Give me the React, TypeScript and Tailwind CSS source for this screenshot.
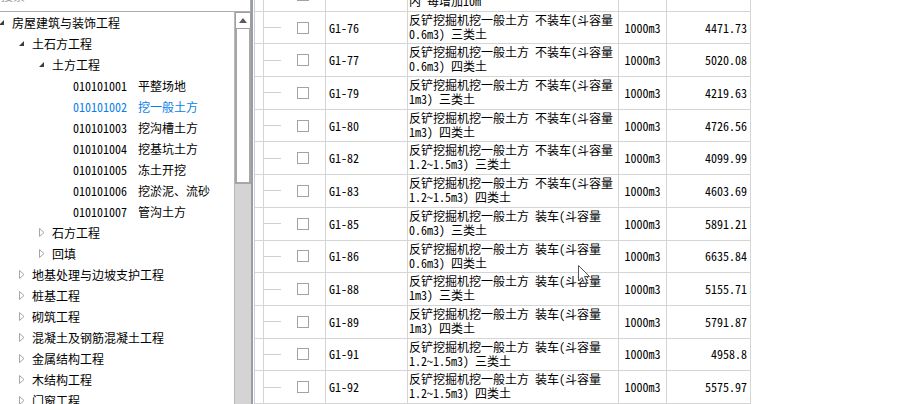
import React from "react";

const font = "font-['Noto_Sans_Mono_CJK_SC','Noto_Sans_CJK_SC','Liberation_Mono',monospace]";

type Node = { lvl: number; text: string; code?: string; open?: boolean; leaf?: boolean; sel?: boolean };

const tree: Node[] = [
  { lvl: 0, text: "房屋建筑与装饰工程", open: true },
  { lvl: 1, text: "土石方工程", open: true },
  { lvl: 2, text: "土方工程", open: true },
  { lvl: 3, code: "010101001", text: "平整场地", leaf: true },
  { lvl: 3, code: "010101002", text: "挖一般土方", leaf: true, sel: true },
  { lvl: 3, code: "010101003", text: "挖沟槽土方", leaf: true },
  { lvl: 3, code: "010101004", text: "挖基坑土方", leaf: true },
  { lvl: 3, code: "010101005", text: "冻土开挖", leaf: true },
  { lvl: 3, code: "010101006", text: "挖淤泥、流砂", leaf: true },
  { lvl: 3, code: "010101007", text: "管沟土方", leaf: true },
  { lvl: 2, text: "石方工程" },
  { lvl: 2, text: "回填" },
  { lvl: 1, text: "地基处理与边坡支护工程" },
  { lvl: 1, text: "桩基工程" },
  { lvl: 1, text: "砌筑工程" },
  { lvl: 1, text: "混凝土及钢筋混凝土工程" },
  { lvl: 1, text: "金属结构工程" },
  { lvl: 1, text: "木结构工程" },
  { lvl: 1, text: "门窗工程" },
];

type Row = { code: string; l1: string; l2: string; unit: string; price: string; cb?: boolean };

const rows: Row[] = [
  { code: "", l1: "", l2: "内 每增加10m", unit: "", price: "", cb: true },
  { code: "G1-76", l1: "反铲挖掘机挖一般土方 不装车(斗容量", l2: "0.6m3) 三类土", unit: "1000m3", price: "4471.73" },
  { code: "G1-77", l1: "反铲挖掘机挖一般土方 不装车(斗容量", l2: "0.6m3) 四类土", unit: "1000m3", price: "5020.08" },
  { code: "G1-79", l1: "反铲挖掘机挖一般土方 不装车(斗容量", l2: "1m3) 三类土", unit: "1000m3", price: "4219.63" },
  { code: "G1-80", l1: "反铲挖掘机挖一般土方 不装车(斗容量", l2: "1m3) 四类土", unit: "1000m3", price: "4726.56" },
  { code: "G1-82", l1: "反铲挖掘机挖一般土方 不装车(斗容量", l2: "1.2~1.5m3) 三类土", unit: "1000m3", price: "4099.99" },
  { code: "G1-83", l1: "反铲挖掘机挖一般土方 不装车(斗容量", l2: "1.2~1.5m3) 四类土", unit: "1000m3", price: "4603.69" },
  { code: "G1-85", l1: "反铲挖掘机挖一般土方 装车(斗容量", l2: "0.6m3) 三类土", unit: "1000m3", price: "5891.21" },
  { code: "G1-86", l1: "反铲挖掘机挖一般土方 装车(斗容量", l2: "0.6m3) 四类土", unit: "1000m3", price: "6635.84" },
  { code: "G1-88", l1: "反铲挖掘机挖一般土方 装车(斗容量", l2: "1m3) 三类土", unit: "1000m3", price: "5155.71" },
  { code: "G1-89", l1: "反铲挖掘机挖一般土方 装车(斗容量", l2: "1m3) 四类土", unit: "1000m3", price: "5791.87" },
  { code: "G1-91", l1: "反铲挖掘机挖一般土方 装车(斗容量", l2: "1.2~1.5m3) 三类土", unit: "1000m3", price: "4958.8" },
  { code: "G1-92", l1: "反铲挖掘机挖一般土方 装车(斗容量", l2: "1.2~1.5m3) 四类土", unit: "1000m3", price: "5575.97" },
];

const Arrow = ({ open }: { open?: boolean }) =>
  open ? (
    <svg width="6" height="6" viewBox="0 0 6 6">
      <path d="M5 0 L5 5 L0 5 Z" fill="#3c3c3c" />
    </svg>
  ) : (
    <svg width="6" height="9" viewBox="0 0 6 9">
      <path d="M0.5 0.5 L5 4.5 L0.5 8.5 Z" fill="white" stroke="#a6a6a6" />
    </svg>
  );

const TreeRow = ({ n }: { n: Node }) => (
  <div className="flex items-center h-[21px] whitespace-nowrap" style={{ paddingLeft: n.lvl * 20 }}>
    {n.leaf ? (
      <div className={`flex items-center ${n.sel ? "text-[#0a7fe8]" : "text-black"}`}>
        <span className="w-[65px] ml-[13px]">{n.code}</span>
        <span>{n.text}</span>
      </div>
    ) : (
      <>
        <span className="w-[13px] flex items-center -ml-[1px] pl-[0px]">
          <Arrow open={n.open} />
        </span>
        <span className="text-black">{n.text}</span>
      </>
    )}
  </div>
);

const Cursor = () => (
  <svg className="absolute left-[578px] top-[265px]" width="13" height="20" viewBox="0 0 13 20">
    <path d="M0.5 0.5 L0.5 16 L4 12.5 L6.5 18.5 L9 17.5 L6.5 11.5 L11.5 11.5 Z" fill="white" stroke="#555" />
  </svg>
);

export default function App() {
  return (
    <div className={`relative flex w-[910px] h-[404px] overflow-hidden bg-white text-[12px] leading-[14px] ${font}`}>
      {/* left tree panel */}
      <div className="flex flex-col w-[253px] border-r-2 border-[#9c9c9c]">
        <div className="h-[12px] overflow-hidden border-b border-r border-[#abadb3] flex items-end">
          <span className="pl-[1px] text-[#9a9a9a] mb-[8px]">搜索</span>
        </div>
        <div className="flex flex-1 overflow-hidden">
          <div className="flex-1 overflow-hidden">
            {tree.map((n, i) => (
              <TreeRow key={i} n={n} />
            ))}
          </div>
          <div className="w-[17px] flex flex-col border-l border-[#b8b8b8] bg-[#d4d4d4]">
            <div className="h-[17px] bg-white border border-[#a0a0a0] flex items-center justify-center">
              <svg width="8" height="5" viewBox="0 0 8 5">
                <path d="M4 0 L8 5 L0 5 Z" fill="#5a5a5a" />
              </svg>
            </div>
            <div className="h-[155px] bg-white border-2 border-t-0 border-[#a6a6a6]" />
          </div>
        </div>
      </div>
      <div className="w-[1px]" />
      <div className="w-[1px] bg-[#c6d0dc]" />
      {/* table */}
      <div className="flex flex-col -mt-[21px]">
        {rows.map((r, i) => (
          <div key={i} className="flex h-[33px] border-b border-[#d5d5d5] text-black">
            <div className="w-[9px] border-r border-[#d5d5d5]" />
            <div className="w-[62px] border-r border-[#d5d5d5] flex items-center">
              <div className="w-[17px] h-px bg-[#cfcfcf]" />
              <div className="ml-[16px] w-[12px] h-[12px] border border-[#a3a3a3] bg-white" />
            </div>
            <div className="w-[82px] border-r border-[#d5d5d5] flex items-center pl-[3px]">{r.code}</div>
            <div className="w-[211px] border-r border-[#d5d5d5] pl-[1px] pt-[1px] whitespace-nowrap overflow-hidden">
              <div className="h-[14px]">{r.l1}</div>
              <div className="h-[14px]">{r.l2}</div>
            </div>
            <div className="w-[48px] border-r border-[#d5d5d5] flex items-center justify-center">{r.unit}</div>
            <div className="w-[84px] border-r border-[#d5d5d5] flex items-center justify-end pr-[3px]">{r.price}</div>
          </div>
        ))}
      </div>
      <Cursor />
    </div>
  );
}
